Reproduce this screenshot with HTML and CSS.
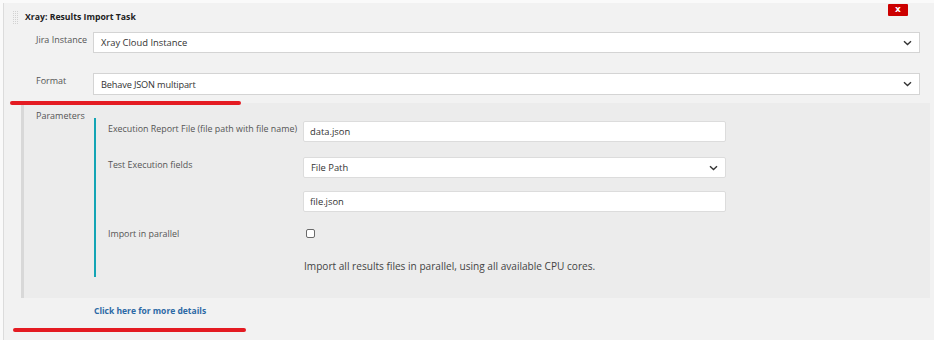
FILE: index.html
```html
<!DOCTYPE html>
<html>
<head>
<meta charset="utf-8">
<title>Xray: Results Import Task</title>
<link rel="stylesheet" href="styles.css">
</head>
<body>
<div class="task">
  <div class="header">
    <svg class="grip" width="6" height="13" viewBox="0 0 6 13">
      <g fill="#d2d2d2">
        <rect x="0" y="0" width="1" height="1"/><rect x="2" y="0" width="1" height="1"/><rect x="4" y="0" width="1" height="1"/>
        <rect x="0" y="2" width="1" height="1"/><rect x="2" y="2" width="1" height="1"/><rect x="4" y="2" width="1" height="1"/>
        <rect x="0" y="4" width="1" height="1"/><rect x="2" y="4" width="1" height="1"/><rect x="4" y="4" width="1" height="1"/>
        <rect x="0" y="6" width="1" height="1"/><rect x="2" y="6" width="1" height="1"/><rect x="4" y="6" width="1" height="1"/>
        <rect x="0" y="8" width="1" height="1"/><rect x="2" y="8" width="1" height="1"/><rect x="4" y="8" width="1" height="1"/>
        <rect x="0" y="10" width="1" height="1"/><rect x="2" y="10" width="1" height="1"/><rect x="4" y="10" width="1" height="1"/>
        <rect x="0" y="12" width="1" height="1"/><rect x="2" y="12" width="1" height="1"/><rect x="4" y="12" width="1" height="1"/>
      </g>
    </svg>
    <span class="title">Xray: Results Import Task</span>
    <span class="close">x</span>
  </div>

  <div class="row row-jira">
    <div class="label">Jira Instance</div>
    <div class="select">
      <span>Xray Cloud Instance</span>
      <svg class="chev" width="9" height="6" viewBox="0 0 9 6"><path d="M1 1.2 L4.5 4.5 L8 1.2" fill="none" stroke="#333" stroke-width="1.4"/></svg>
    </div>
  </div>

  <div class="row row-format">
    <div class="label">Format</div>
    <div class="select tall">
      <span class="narrow">Behave JSON multipart</span>
      <svg class="chev" width="9" height="6" viewBox="0 0 9 6"><path d="M1 1.2 L4.5 4.5 L8 1.2" fill="none" stroke="#333" stroke-width="1.4"/></svg>
    </div>
  </div>

  <div class="params">
    <div class="params-label">Parameters</div>
    <div class="params-body">
      <div class="prow prow-1">
        <div class="plabel">Execution Report File (file path with file name)</div>
        <div class="input">data.json</div>
      </div>
      <div class="prow prow-2">
        <div class="plabel">Test Execution fields</div>
        <div class="select small">
          <span>File Path</span>
          <svg class="chev" width="9" height="6" viewBox="0 0 9 6"><path d="M1 1.2 L4.5 4.5 L8 1.2" fill="none" stroke="#333" stroke-width="1.4"/></svg>
        </div>
      </div>
      <div class="prow prow-3">
        <div class="plabel"></div>
        <div class="input">file.json</div>
      </div>
      <div class="prow prow-4">
        <div class="plabel">Import in parallel</div>
        <div class="check-cell"><span class="checkbox"></span></div>
      </div>
      <div class="prow prow-5">
        <div class="plabel"></div>
        <div class="help">Import all results files in parallel, using all available CPU cores.</div>
      </div>
    </div>
  </div>

  <div class="details"><a class="link" href="#">Click here for more details</a></div>

  <div class="mark mark-1"></div>
  <div class="mark mark-2"></div>
</div>
</body>
</html>
```

FILE: styles.css
```css
* { box-sizing: border-box; }

body {
  margin: 0;
  background: #fafafa;
  font-family: "Open Sans", "Noto Sans", sans-serif;
  color: #444;
}

.task {
  position: relative;
  margin: 3px 0 0 3px;
  border-left: 1px solid #dcdcdc;
  background: #f2f2f2;
  min-height: 337px;
}

.header {
  display: flex;
  align-items: flex-start;
  height: 29px;
  padding-left: 9px;
  padding-right: 26px;
}

.grip {
  margin-top: 8px;
  flex: none;
}

.title {
  margin-left: 6px;
  margin-top: 7px;
  font-size: 8.7px;
  line-height: 14px;
  font-weight: 700;
  color: #222;
  flex: 1;
}

.close {
  margin-top: 1px;
  width: 20px;
  height: 12px;
  background: #cc0000;
  color: #fff;
  font-family: "DejaVu Sans", sans-serif;
  font-size: 9px;
  font-weight: 700;
  line-height: 11px;
  text-align: center;
  border-radius: 1px;
}

.row {
  display: grid;
  grid-template-columns: 57px 1fr;
  padding-left: 32px;
  padding-right: 14px;
  align-items: start;
}

.row-format { margin-top: 20px; }

.label {
  font-size: 9px;
  line-height: 13px;
  padding-top: 1px;
  color: #555;
}

.select {
  display: flex;
  align-items: center;
  justify-content: space-between;
  height: 21px;
  background: #fff;
  border: 1px solid #d4d4d4;
  padding: 0 7px 0 7px;
  font-size: 9.4px;
  color: #333;
}

.select.tall { height: 22px; }

.narrow { font-size: 9.2px; letter-spacing: -0.15px; }

.chev { flex: none; }

.params {
  display: grid;
  grid-template-columns: 58px 1fr;
  align-items: start;
  margin: 8px 4px 0 17px;
  padding: 0 0 21px 12px;
  background: #ececec;
  border-left: 3px solid #d8d8d8;
}

.params-label {
  padding-top: 6px;
  font-size: 9px;
  line-height: 13px;
  color: #555;
}

.params-body {
  margin-top: 15px;
  border-left: 2px solid #13a5b5;
  padding: 3px 0 4px 12px;
}

.prow {
  display: grid;
  grid-template-columns: 195px 423px;
  align-items: start;
}

.prow-2 { margin-top: 15px; }
.prow-3 { margin-top: 13px; }
.prow-4 { margin-top: 14px; }
.prow-5 { margin-top: 19px; }

.plabel {
  font-size: 8.9px;
  line-height: 13px;
  padding-top: 1px;
  color: #555;
}

.input {
  height: 21px;
  background: #fff;
  border: 1px solid #dcdcdc;
  border-radius: 2px;
  padding-left: 6px;
  font-size: 9.4px;
  line-height: 19px;
  color: #333;
}

.select.small { border-color: #dcdcdc; border-radius: 2px; }

.check-cell {
  padding: 3px 0 0 3px;
  height: 13px;
}

.checkbox {
  display: block;
  width: 9px;
  height: 9px;
  background: #fff;
  border: 1px solid #6a6a6a;
  border-radius: 2px;
}

.help {
  padding-left: 1px;
  font-size: 10.1px;
  line-height: 14px;
  color: #444;
}

.details {
  padding: 6px 0 0 90px;
  font-size: 8.5px;
  line-height: 13px;
}

.link {
  color: #2c69a5;
  font-weight: 700;
  text-decoration: none;
}

.mark {
  position: absolute;
  height: 4px;
  background: #e41b22;
  border-radius: 2px;
}

.mark-1 { left: 6px; top: 98px; width: 231px; }
.mark-2 { left: 9px; top: 325px; width: 233px; }
```
